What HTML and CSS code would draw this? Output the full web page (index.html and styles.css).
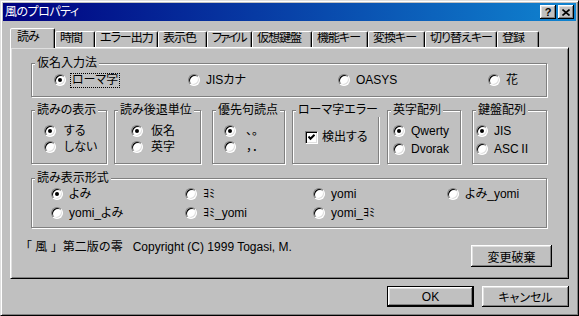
FILE: index.html
```html
<!DOCTYPE html>
<html lang="ja">
<head>
<meta charset="utf-8">
<title>風のプロパティ</title>
<link rel="stylesheet" href="styles.css">
</head>
<body>
<div class="window">
  <div class="titlebar">
    <span class="title">風のプロパティ</span>
    <div class="tbtns">
      <span class="tbtn q">?</span>
      <span class="tbtn"><svg width="8" height="7" viewBox="0 0 8 7"><path d="M0.5 0.5 L7.5 6.5 M7.5 0.5 L0.5 6.5" stroke="#000" stroke-width="1.6" fill="none"/></svg></span>
    </div>
  </div>
  <div class="body">
    <div class="tabs">
      <div class="tab sel t1">読み</div>
      <div class="tab t2">時間</div>
      <div class="tab t3">エラー出力</div>
      <div class="tab t4">表示色</div>
      <div class="tab t5 tight">ファイル</div>
      <div class="tab t6">仮想鍵盤</div>
      <div class="tab t7">機能キー</div>
      <div class="tab t8">変換キー</div>
      <div class="tab t9">切り替えキー</div>
      <div class="tab t10">登録</div>
    </div>
    <div class="panel">
      <div class="grp g1">
        <span class="grp-label">仮名入力法</span>
        <div class="opt"><span class="radio on"></span><span class="lbl focus">ローマ字</span></div>
        <div class="opt"><span class="radio"></span><span class="lbl">JISカナ</span></div>
        <div class="opt"><span class="radio"></span><span class="lbl">OASYS</span></div>
        <div class="opt"><span class="radio"></span><span class="lbl">花</span></div>
      </div>
      <div class="row2">
        <div class="grp gs ga">
          <span class="grp-label">読みの表示</span>
          <div class="opt"><span class="radio on"></span><span class="lbl jp">する</span></div>
          <div class="opt"><span class="radio"></span><span class="lbl jp">しない</span></div>
        </div>
        <div class="grp gs gb">
          <span class="grp-label">読み後退単位</span>
          <div class="opt"><span class="radio on"></span><span class="lbl jp">仮名</span></div>
          <div class="opt"><span class="radio"></span><span class="lbl jp">英字</span></div>
        </div>
        <div class="grp gs gc">
          <span class="grp-label">優先句読点</span>
          <div class="opt"><span class="radio on"></span><span class="lbl jp punct">、。</span></div>
          <div class="opt"><span class="radio"></span><span class="lbl jp punct">，．</span></div>
        </div>
        <div class="grp gs gd">
          <span class="grp-label">ローマ字エラー</span>
          <div class="opt"><span class="chk"><svg width="7" height="7" viewBox="0 0 7 7"><path d="M0.5 2.5 L2.5 4.8 L6.5 0.8" stroke="#000" stroke-width="2" fill="none"/></svg></span><span class="chk-lbl">検出する</span></div>
        </div>
        <div class="grp gs ge">
          <span class="grp-label">英字配列</span>
          <div class="opt"><span class="radio on"></span><span class="lbl">Qwerty</span></div>
          <div class="opt"><span class="radio"></span><span class="lbl">Dvorak</span></div>
        </div>
        <div class="grp gs gf">
          <span class="grp-label">鍵盤配列</span>
          <div class="opt"><span class="radio on"></span><span class="lbl">JIS</span></div>
          <div class="opt"><span class="radio"></span><span class="lbl">ASCⅡ</span></div>
        </div>
      </div>
      <div class="grp g3">
        <span class="grp-label">読み表示形式</span>
        <div class="opt"><span class="radio on"></span><span class="lbl">よみ</span></div>
        <div class="opt"><span class="radio"></span><span class="lbl">ﾖﾐ</span></div>
        <div class="opt"><span class="radio"></span><span class="lbl">yomi</span></div>
        <div class="opt"><span class="radio"></span><span class="lbl">よみ_yomi</span></div>
        <div class="opt"><span class="radio"></span><span class="lbl">yomi_よみ</span></div>
        <div class="opt"><span class="radio"></span><span class="lbl">ﾖﾐ_yomi</span></div>
        <div class="opt"><span class="radio"></span><span class="lbl">yomi_ﾖﾐ</span></div>
      </div>
      <div class="footer">
        <span class="copy">「 風 」第二版の零   Copyright (C) 1999 Togasi, M.</span>
        <button class="btn discard">変更破棄</button>
      </div>
    </div>
    <div class="actions">
      <button class="btn act default">OK</button>
      <button class="btn act">キャンセル</button>
    </div>
  </div>
</div>
</body>
</html>
```

FILE: styles.css
```css
* { box-sizing: border-box; }
html, body { margin: 0; padding: 0; }
body {
  width: 579px;
  height: 316px;
  background: #c0c0c0;
  font: 12px "Liberation Sans", "Noto Sans CJK JP", sans-serif;
  color: #000;
  font-feature-settings: "palt";
}
.window {
  width: 579px;
  height: 316px;
  background: #c0c0c0;
  border: 1px solid;
  border-color: #dfdfdf #000 #000 #dfdfdf;
  box-shadow: inset 1px 1px #fff, inset -1px -1px #808080;
  padding: 2px;
}
.titlebar {
  height: 18px;
  background: linear-gradient(90deg, #000080, #1084d0);
  display: flex;
  align-items: center;
  justify-content: space-between;
  padding: 0 2px;
}
.title { color: #fff; line-height: 18px; letter-spacing: -0.5px; }
.tbtns { display: flex; gap: 2px; }
.tbtn {
  width: 16px;
  height: 14px;
  background: #c0c0c0;
  box-shadow: inset -1px -1px #000, inset 1px 1px #fff, inset -2px -2px #808080, inset 2px 2px #dfdfdf;
  display: flex;
  align-items: center;
  justify-content: center;
}
.tbtn.q { font: bold 11px "Liberation Sans", sans-serif; line-height: 12px; padding-bottom: 1px; }

.body { padding: 7px 7px 0; }
.tabs { display: flex; align-items: flex-end; height: 19px; }
.tab {
  height: 16px;
  border: 1px solid;
  border-bottom: none;
  border-color: #fff #000 transparent #fff;
  border-radius: 2px 2px 0 0;
  box-shadow: inset -1px 0 #808080;
  padding: 0 0 0 4px;
  line-height: 13px;
  white-space: nowrap;
  letter-spacing: -1px;
  background: #c0c0c0;
  overflow: hidden;
}
.tab.tight { letter-spacing: -2px; }
.tab.sel {
  height: 20px;
  margin-bottom: -1px;
  position: relative;
  z-index: 1;
  padding-left: 6px;
  line-height: 16px;
}
.t1 { width: 45px; } .t2 { width: 40px; } .t3 { width: 63px; } .t4 { width: 49px; }
.t5 { width: 45px; } .t6 { width: 60px; } .t7 { width: 56px; } .t8 { width: 57px; }
.t9 { width: 72px; } .t10 { width: 42px; }

.panel {
  height: 232px;
  border: 1px solid;
  border-color: #fff #000 #000 #fff;
  box-shadow: inset 1px 1px #dfdfdf, inset -1px -1px #808080;
  padding: 15px 0 0 20px;
}
.grp {
  position: relative;
  border: 1px solid #808080;
  box-shadow: inset 1px 1px #fff, 1px 1px #fff;
}
.grp-label {
  position: absolute;
  top: -8px;
  left: 3px;
  padding: 0 2px;
  background: #c0c0c0;
  line-height: 14px;
  white-space: nowrap;
}
.opt { display: flex; align-items: center; height: 16px; white-space: nowrap; }
.radio {
  flex: none;
  width: 12px;
  height: 12px;
  border-radius: 50%;
  border: 1px solid;
  border-color: #808080 #fff #fff #808080;
  background: #fff;
  box-shadow: inset 1px 1px #000, inset -1px -1px #dfdfdf;
}
.radio.on::after {
  content: "";
  display: block;
  width: 4px;
  height: 4px;
  margin: 3px;
  border-radius: 50%;
  background: #000;
}
.lbl {
  margin-left: 4px;
  padding: 0 1px;
  border: 1px solid transparent;
  line-height: 13px;
}
.lbl.jp { margin-left: 6px; }
.lbl.punct { margin-left: 8px; font-feature-settings: normal; }
.lbl.focus { border: 1px dotted #000; }
.chk {
  flex: none;
  width: 13px;
  height: 13px;
  background: #fff;
  border: 1px solid;
  border-color: #808080 #fff #fff #808080;
  box-shadow: inset 1px 1px #000, inset -1px -1px #dfdfdf;
  display: flex;
  align-items: center;
  justify-content: center;
}
.chk-lbl { margin-left: 4px; line-height: 13px; }

.g1 {
  width: 516px;
  height: 34px;
  padding: 8px 0 0 22px;
  display: grid;
  grid-template-columns: 134px 150px 150px auto;
  align-content: start;
}
.row2 { display: flex; margin-top: 13px; }
.gs { height: 54px; padding-top: 12px; }
.ga { width: 76px; padding-left: 12px; }
.gb { width: 87px; margin-left: 7px; padding-left: 16px; }
.gc { width: 73px; margin-left: 11px; padding-left: 11px; }
.gd { width: 87px; margin-left: 7px; padding-left: 12px; padding-top: 18px; }
.ge { width: 74px; margin-left: 8px; padding-left: 5px; display: flex; flex-direction: column; gap: 2px; }
.gf { width: 75px; margin-left: 11px; padding-left: 3px; display: flex; flex-direction: column; gap: 2px; }

.g3 {
  width: 516px;
  height: 50px;
  margin-top: 14px;
  padding: 7px 0 0 19px;
  display: grid;
  grid-template-columns: 134px 128px 134px auto;
  row-gap: 3px;
  align-content: start;
}
.footer {
  display: flex;
  justify-content: space-between;
  align-items: flex-start;
  margin: 10px 0 0 -11px;
  width: 532px;
}
.copy { line-height: 18px; white-space: pre; font-feature-settings: normal; }
.btn {
  font: inherit;
  color: #000;
  background: #c0c0c0;
  border: none;
  padding: 0;
  box-shadow: inset -1px -1px #000, inset 1px 1px #fff, inset -2px -2px #808080, inset 2px 2px #dfdfdf;
}
.discard { width: 81px; height: 22px; margin-top: 7px; }
.actions { display: flex; justify-content: flex-end; gap: 8px; margin-top: 7px; }
.act { width: 87px; height: 21px; }
.btn.default { border: 1px solid #000; }
```
